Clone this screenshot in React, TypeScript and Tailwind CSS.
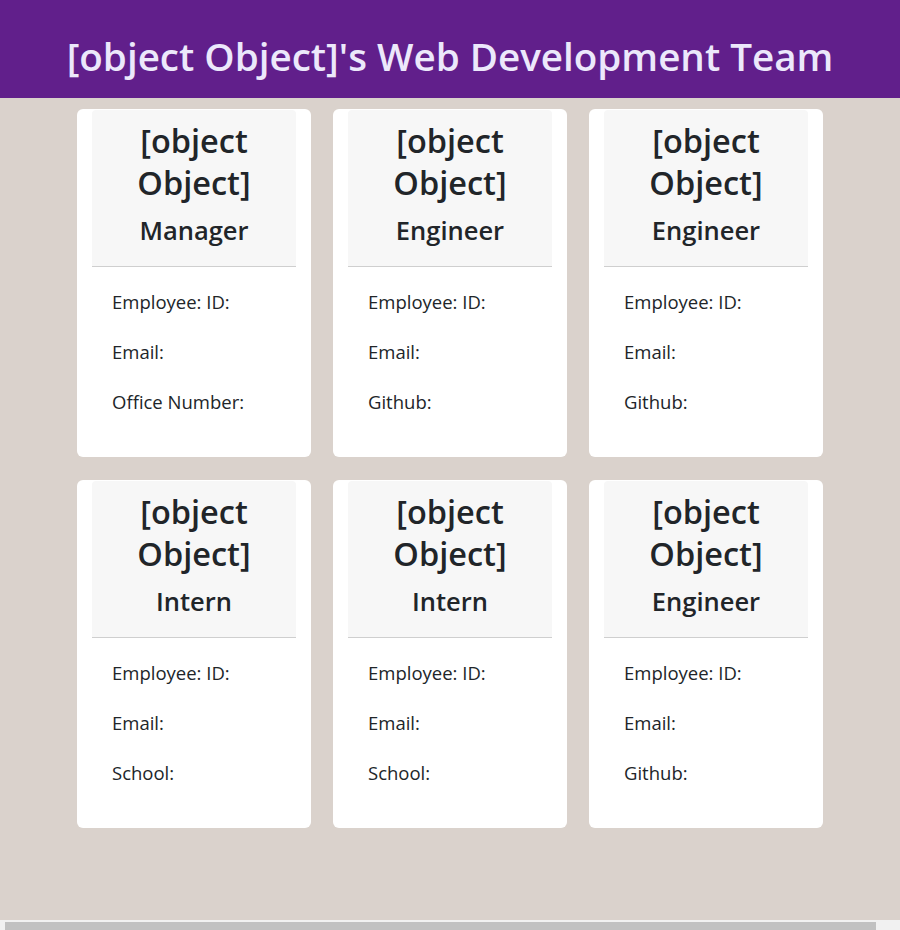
const team = [
  { name: "[object Object]", role: "Manager", extra: "Office Number:" },
  { name: "[object Object]", role: "Engineer", extra: "Github:" },
  { name: "[object Object]", role: "Engineer", extra: "Github:" },
  { name: "[object Object]", role: "Intern", extra: "School:" },
  { name: "[object Object]", role: "Intern", extra: "School:" },
  { name: "[object Object]", role: "Engineer", extra: "Github:" },
];

function EmployeeCard({ name, role, extra }: { name: string; role: string; extra: string }) {
  return (
    <div className="w-[234px] h-[348px] bg-white rounded-[6px] px-[15px] pt-px">
      {/* Card header */}
      <div className="bg-[#f7f7f7] border-b border-[#cfcfcf] rounded-t-[4px] h-[157px] flex flex-col items-center pt-[10px] text-[#212529]">
        <h2 className="text-[32.5px] leading-[42px] font-semibold text-center w-[160px]">{name}</h2>
        <h3 className="text-[25.5px] leading-[32px] font-semibold mt-[10px]">{role}</h3>
      </div>
      {/* Card body */}
      <ul className="px-[20px] pt-[24px] flex flex-col gap-[28px] text-[18.5px] leading-[22px] text-[#212529]">
        <li>Employee: ID:</li>
        <li>Email:</li>
        <li>{extra}</li>
      </ul>
    </div>
  );
}

export default function App() {
  return (
    <div
      className="h-[930px] flex flex-col bg-[#dad2cc] overflow-hidden"
      style={{ fontFamily: '"Open Sans", "Noto Sans", sans-serif' }}
    >
      <header className="h-[98px] bg-[#611f8b] flex items-center justify-center pt-[16px]">
        <h1 className="text-[38.6px] font-semibold text-[#ece8fb]">
          [object Object]'s Web Development Team
        </h1>
      </header>

      <main className="flex-1 pt-[11px]">
        <div className="grid grid-cols-[234px_234px_234px] gap-x-[22px] gap-y-[23px] justify-center">
          {team.map((member, i) => (
            <EmployeeCard key={i} {...member} />
          ))}
        </div>
      </main>

      {/* Horizontal scrollbar */}
      <div className="h-[10px] bg-[#f1f1f1] flex items-end pl-[5px] pr-[24px] pt-[2px]">
        <div className="h-[8px] flex-1 bg-[#c1c1c1]" />
      </div>
    </div>
  );
}
